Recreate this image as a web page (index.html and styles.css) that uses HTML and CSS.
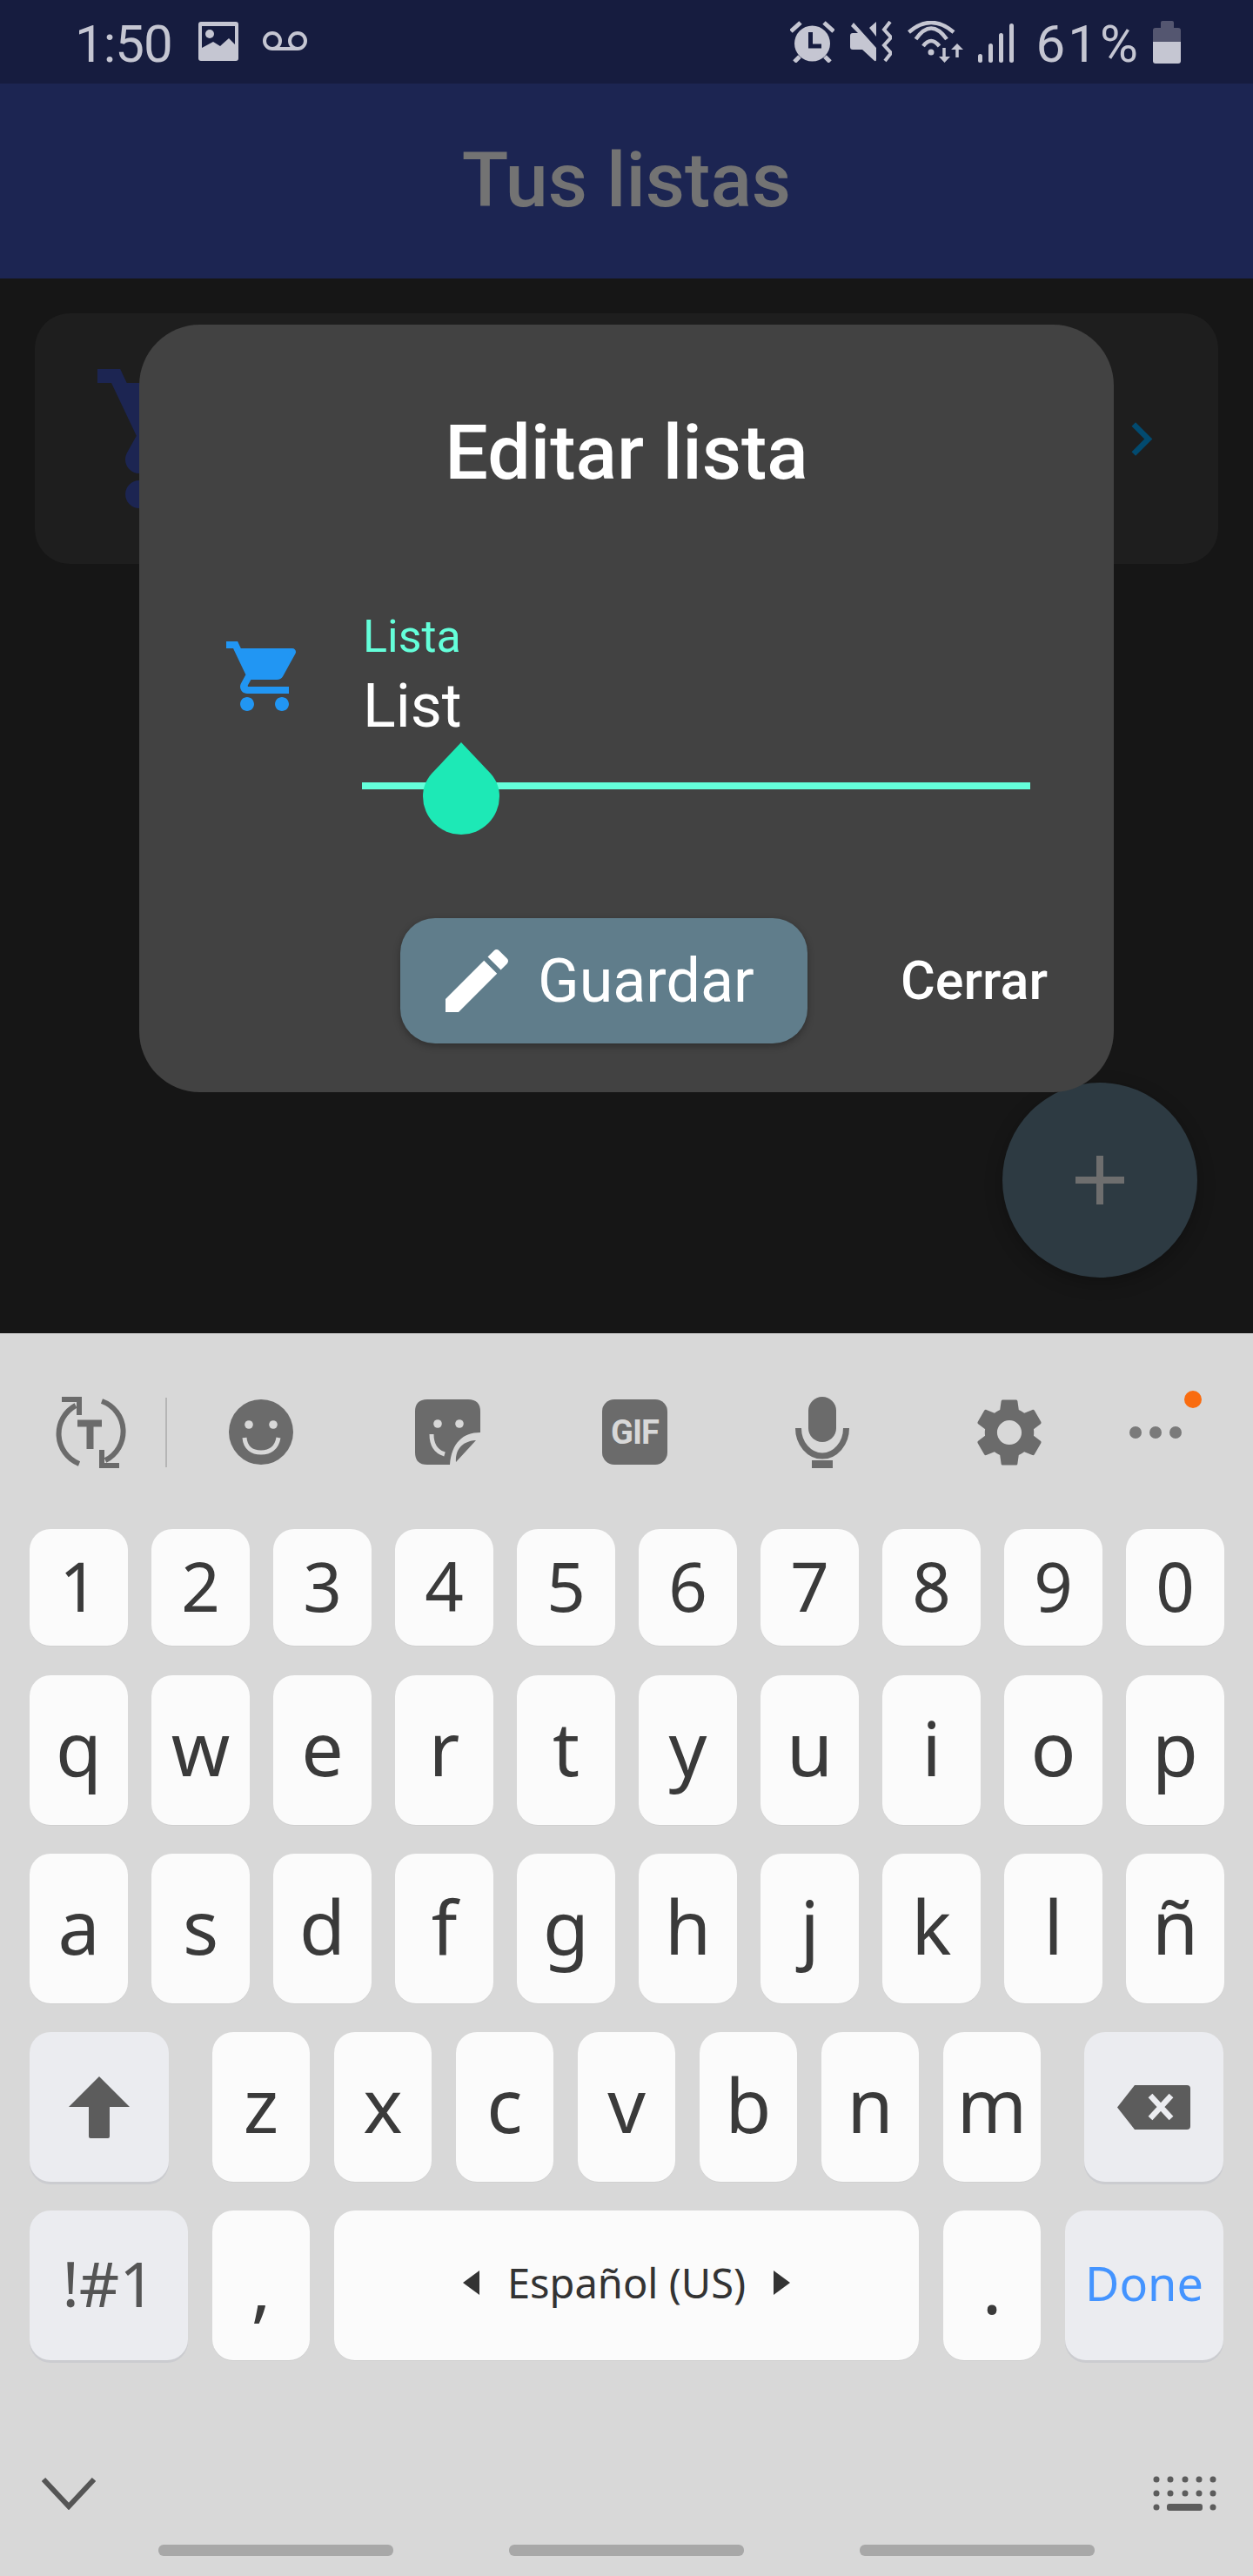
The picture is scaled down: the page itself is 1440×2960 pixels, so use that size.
FILE: index.html
```html
<!DOCTYPE html>
<html lang="es">
<head>
    <meta charset="UTF-8">
    <meta name="viewport" content="width=device-width, initial-scale=1.0">
    <title>Tus listas</title>
    <link rel="stylesheet" href="styles.css">
</head>
<body>
<!-- barra de estado -->
<div class="status">
    <div class="status-left">
        <span class="clock">1:50</span>
        <svg class="st-image" width="46" height="45" viewBox="0 0 46 45">
            <rect width="46" height="45" rx="3" fill="#c5c6d2"/>
            <rect x="4" y="5" width="38" height="35" fill="#161c3f"/>
            <circle cx="13" cy="14" r="5" fill="#c5c6d2"/>
            <path d="M4 30L17 23L25 28L35 19L42 26V40H4Z" fill="#c5c6d2"/>
        </svg>
        <svg class="st-voicemail" width="51" height="24" viewBox="0 0 51 24" fill="none" stroke="#c5c6d2" stroke-width="4">
            <circle cx="11" cy="12" r="9"/>
            <circle cx="40" cy="12" r="9"/>
            <path d="M11 21H40"/>
        </svg>
    </div>
    <div class="status-right">
        <svg class="st-alarm" width="51" height="48" viewBox="0 0 51 48">
            <circle cx="25.5" cy="26" r="20.5" fill="#c5c6d2"/>
            <path d="M23.5 13V29H36" fill="none" stroke="#161c3f" stroke-width="5"/>
            <path d="M1 12L12 2M39 2L50 12M5 47L11 41M46 47L40 41" fill="none" stroke="#c5c6d2" stroke-width="5"/>
        </svg>
        <svg class="st-mute" width="48" height="48" viewBox="0 0 48 48">
            <path d="M4 2L30 31V44Q30 48 27 45L14 33H3Q0 33 0 30V17Q0 14 3 14H9L1 6Z" fill="#c5c6d2"/>
            <path d="M22 8L30 1V18Z" fill="#c5c6d2"/>
            <path d="M46 1L39 10L47 19L39 28L47 37L40 46" fill="none" stroke="#c5c6d2" stroke-width="4"/>
        </svg>
        <svg class="st-wifi" width="64" height="48" viewBox="0 0 64 48" fill="none" stroke="#c5c6d2">
            <path d="M1.5 13Q27 -9 53 13M9.5 21Q27 -4 45 21M18 29Q27 17 36.5 29" stroke-width="4.5"/>
            <circle cx="27" cy="36" r="3.5" fill="#c5c6d2" stroke="none"/>
            <path d="M42 31V42M57 42V29" stroke-width="3.5"/>
            <path d="M36 41H49L42.5 48ZM50 33H64L57 26Z" fill="#c5c6d2" stroke="none"/>
        </svg>
        <div class="st-signal">
            <i class="bar b1"></i><i class="bar b2"></i><i class="bar b3"></i><i class="bar b4"></i>
        </div>
        <span class="percent">61%</span>
        <div class="st-battery">
            <i class="nub"></i>
            <i class="cell"></i>
        </div>
    </div>
</div>

<div class="appbar">Tus listas</div>

<div class="content">
    <div class="card">
        <svg class="card-cart" width="192" height="192" viewBox="0 0 24 24"><path d="M7 18c-1.1 0-1.99.9-1.99 2S5.9 22 7 22s2-.9 2-2-.9-2-2-2zM1 2v2h2l3.6 7.59-1.35 2.45c-.16.28-.25.61-.25.96 0 1.1.9 2 2 2h12v-2H7.42c-.14 0-.25-.11-.25-.25l.03-.12.9-1.63h7.45c.75 0 1.41-.41 1.75-1.03l3.58-6.49c.08-.14.12-.31.12-.48 0-.55-.45-1-1-1H5.21l-.94-2H1zm16 16c-1.1 0-1.99.9-1.99 2s.89 2 1.99 2 2-.9 2-2-.9-2-2-2z"/></svg>
        <svg class="card-arrow" width="77" height="77" viewBox="0 0 24 24"><path d="M8.59 16.59L13.17 12 8.59 7.41 10 6l6 6-6 6-1.41-1.41z"/></svg>
    </div>

    <button class="fab"><i class="plus-h"></i><i class="plus-v"></i></button>

    <div class="dialog">
        <h2 class="dialog-title">Editar lista</h2>
        <div class="field">
            <svg class="field-cart" width="96" height="96" viewBox="0 0 24 24"><path d="M7 18c-1.1 0-1.99.9-1.99 2S5.9 22 7 22s2-.9 2-2-.9-2-2-2zM1 2v2h2l3.6 7.59-1.35 2.45c-.16.28-.25.61-.25.96 0 1.1.9 2 2 2h12v-2H7.42c-.14 0-.25-.11-.25-.25l.03-.12.9-1.63h7.45c.75 0 1.41-.41 1.75-1.03l3.58-6.49c.08-.14.12-.31.12-.48 0-.55-.45-1-1-1H5.21l-.94-2H1zm16 16c-1.1 0-1.99.9-1.99 2s.89 2 1.99 2 2-.9 2-2-.9-2-2-2z"/></svg>
            <div class="field-box">
                <div class="field-label">Lista</div>
                <div class="field-value">List</div>
                <div class="field-line"></div>
                <svg class="handle" width="88" height="106" viewBox="0 0 88 106"><path d="M44 0L78 36C85 44 88 53 88 62A44 44 0 0 1 0 62C0 53 3 44 10 36Z"/></svg>
            </div>
        </div>
        <div class="actions">
            <button class="btn-save">
                <svg width="96" height="96" viewBox="0 0 24 24"><path d="M3 17.25V21h3.75L17.81 9.94l-3.75-3.75L3 17.25zM20.71 7.04c.39-.39.39-1.02 0-1.41l-2.34-2.34c-.39-.39-1.02-.39-1.41 0l-1.83 1.83 3.75 3.75 1.83-1.83z"/></svg>
                <span>Guardar</span>
            </button>
            <button class="btn-close">Cerrar</button>
        </div>
    </div>
</div>

<!-- teclado -->
<div class="keyboard">
    <div class="kb-tools">
        <svg class="tool-translate" width="82" height="82" viewBox="0 0 82 82" fill="none" stroke="#6b6b6b">
            <path d="M24 10A37 37 0 0 0 28 77M54 5A37 37 0 0 1 58 73" stroke-width="6"/>
            <path d="M8 3H28V21M74 79H54V61" stroke-width="6"/>
            <path d="M26 30.5H54M40.5 30V60" stroke-width="8"/>
        </svg>
        <i class="tool-sep"></i>
        <div class="tool">
            <svg width="74" height="75" viewBox="0 0 74 75">
                <ellipse cx="37" cy="37.5" rx="37" ry="37.5" fill="#6b6b6b"/>
                <circle cx="23" cy="29" r="4.8" fill="#d8d8d8"/>
                <circle cx="51" cy="29" r="4.8" fill="#d8d8d8"/>
                <path d="M18 44C19 56 27 61 37 61S55 56 57 44" fill="none" stroke="#d8d8d8" stroke-width="5"/>
            </svg>
        </div>
        <div class="tool">
            <svg width="75" height="75" viewBox="0 0 75 75" fill="#6b6b6b">
                <path d="M14 0H61Q75 0 75 14V38C55 38 42 50 40 75H14Q0 75 0 61V14Q0 0 14 0Z"/>
                <path d="M70 47L47 72C46 60 52 48 70 47Z"/>
                <circle cx="26" cy="28" r="4.8" fill="#d8d8d8"/>
                <circle cx="51" cy="28" r="4.8" fill="#d8d8d8"/>
                <path d="M19 40C19 52 24 60 34 63" fill="none" stroke="#d8d8d8" stroke-width="5"/>
            </svg>
        </div>
        <div class="tool"><div class="gif">GIF</div></div>
        <div class="tool">
            <svg width="62" height="82" viewBox="0 0 62 82" fill="#6b6b6b">
                <rect x="15" width="32" height="52" rx="16"/>
                <path d="M3.5 36a27.5 32 0 0 0 55 0" fill="none" stroke="#6b6b6b" stroke-width="7"/>
                <rect x="19" y="73" width="24" height="9"/>
            </svg>
        </div>
        <div class="tool">
            <svg width="94" height="94" viewBox="0 0 24 24" fill="#6b6b6b"><path d="M19.14 12.94c.04-.3.06-.61.06-.94 0-.32-.02-.64-.07-.94l2.03-1.58c.18-.14.23-.41.12-.61l-1.92-3.32c-.12-.22-.37-.29-.59-.22l-2.39.96c-.5-.38-1.03-.7-1.62-.94l-.36-2.54c-.04-.24-.24-.41-.48-.41h-3.84c-.24 0-.43.17-.47.41l-.36 2.54c-.59.24-1.13.57-1.62.94l-2.39-.96c-.22-.08-.47 0-.59.22L2.74 8.87c-.12.21-.08.47.12.61l2.03 1.58c-.05.3-.09.63-.09.94s.02.64.07.94l-2.03 1.58c-.18.14-.23.41-.12.61l1.92 3.32c.12.22.37.29.59.22l2.39-.96c.5.38 1.03.7 1.62.94l.36 2.54c.05.24.24.41.48.41h3.84c.24 0 .44-.17.47-.41l.36-2.54c.59-.24 1.13-.56 1.62-.94l2.39.96c.22.08.47 0 .59-.22l1.92-3.32c.12-.22.07-.47-.12-.61l-2.01-1.58zM12 15.6c-1.98 0-3.6-1.62-3.6-3.6s1.62-3.6 3.6-3.6 3.6 1.62 3.6 3.6-1.62 3.6-3.6 3.6z"/></svg>
        </div>
        <div class="more"><i></i><i></i><i></i><b class="more-dot"></b></div>
    </div>

    <div class="kb-row row-num">
        <div class="key">1</div><div class="key">2</div><div class="key">3</div><div class="key">4</div><div class="key">5</div><div class="key">6</div><div class="key">7</div><div class="key">8</div><div class="key">9</div><div class="key">0</div>
    </div>
    <div class="kb-row">
        <div class="key">q</div><div class="key">w</div><div class="key">e</div><div class="key">r</div><div class="key">t</div><div class="key">y</div><div class="key">u</div><div class="key">i</div><div class="key">o</div><div class="key">p</div>
    </div>
    <div class="kb-row">
        <div class="key">a</div><div class="key">s</div><div class="key">d</div><div class="key">f</div><div class="key">g</div><div class="key">h</div><div class="key">j</div><div class="key">k</div><div class="key">l</div><div class="key">ñ</div>
    </div>
    <div class="kb-row row-z">
        <div class="key fn key-shift">
            <svg width="70" height="71" viewBox="0 0 70 71" fill="#5c5c5c"><path d="M35 0L70 35H47V69Q47 71 45 71H25Q23 71 23 69V35H0Z"/></svg>
        </div>
        <div class="key">z</div><div class="key">x</div><div class="key">c</div><div class="key">v</div><div class="key">b</div><div class="key">n</div><div class="key">m</div>
        <div class="key fn key-back">
            <svg width="84" height="51" viewBox="0 0 84 51"><path d="M20 0H80Q84 0 84 4V47Q84 51 80 51H20L0 25.5Z" fill="#5c5c5c"/><path d="M38 12L62 38M62 12L38 38" stroke="#ebecf0" stroke-width="6.5"/></svg>
        </div>
    </div>
    <div class="kb-row row-space">
        <div class="key fn key-sym">!#1</div>
        <div class="key key-punct">,</div>
        <div class="key key-space"><i class="tri-l"></i><span>Español (US)</span><i class="tri-r"></i></div>
        <div class="key key-punct">.</div>
        <div class="key fn key-done">Done</div>
    </div>

    <div class="kb-bottom">
        <svg width="62" height="38" viewBox="0 0 62 38" fill="none" stroke="#555" stroke-width="6"><path d="M2 3L31 34L60 3"/></svg>
        <svg width="73" height="40" viewBox="0 0 73 40" fill="#5c5c5c">
            <circle cx="4" cy="4" r="3.5"/><circle cx="20" cy="4" r="3.5"/><circle cx="37" cy="4" r="3.5"/><circle cx="53" cy="4" r="3.5"/><circle cx="69" cy="4" r="3.5"/>
            <circle cx="4" cy="20" r="3.5"/><circle cx="20" cy="20" r="3.5"/><circle cx="37" cy="20" r="3.5"/><circle cx="53" cy="20" r="3.5"/><circle cx="69" cy="20" r="3.5"/>
            <circle cx="4" cy="36" r="3.5"/><rect x="16" y="32" width="41" height="8" rx="3"/><circle cx="69" cy="36" r="3.5"/>
        </svg>
    </div>
    <div class="kb-nav"><i></i><i></i><i></i></div>
</div>
</body>
</html>
```

FILE: styles.css
```css
*{
    box-sizing: border-box;
    margin:0;
    padding:0;
}
html,body{
    width:1440px;
    height:2960px;
    overflow:hidden;
}
body{
    display:flex;
    flex-direction:column;
    font-family:Roboto,"Noto Sans",sans-serif;
    background:#161616;
}
button{
    border:none;
    font-family:inherit;
    color:#fff;
    background:none;
}
i{
    display:block;
}

/* status */
.status{
    height:96px;
    flex:none;
    background:#161c3f;
    color:#c5c6d2;
    display:flex;
    justify-content:space-between;
    padding:0 83px 0 86px;
}
.status-left,.status-right{
    display:flex;
    align-items:flex-start;
    padding-top:24px;
}
.clock,.percent{
    font-size:60px;
    line-height:50px;
    margin-top:2px;
}
.clock{
    letter-spacing:-1px;
}
.st-image{
    margin:1px 0 0 30px;
}
.st-voicemail{
    margin:11px 0 0 28px;
}
.st-mute{
    margin-left:18px;
}
.st-wifi{
    margin-left:18px;
}
.st-signal{
    margin-left:17px;
    width:41px;
    height:48px;
    display:flex;
    justify-content:space-between;
    align-items:flex-end;
}
.bar{
    width:5px;
    background:#c5c6d2;
    border-radius:3px;
}
.b1{height:10px;}
.b2{height:22px;}
.b3{height:34px;}
.b4{height:45px;}
.percent{
    margin-left:26px;
    letter-spacing:3px;
}
.st-battery{
    margin-left:14px;
    width:32px;
}
.nub{
    width:15px;
    height:8px;
    margin:0 auto;
    background:#545670;
    border-radius:2px 2px 0 0;
}
.cell{
    height:41px;
    border-radius:3px;
    background:linear-gradient(#545670 16px,#c5c6d2 16px);
}

/* app */
.appbar{
    height:224px;
    flex:none;
    background:#1c2552;
    color:#737373;
    font-size:88px;
    font-weight:500;
    display:flex;
    align-items:center;
    justify-content:center;
    padding-bottom:4px;
}
.content{
    height:1212px;
    flex:none;
    position:relative;
    padding:40px 40px 0;
    background:#161616;
}
.card{
    height:288px;
    border-radius:40px;
    background:#1e1e1e;
    padding:0 50px 0 64px;
    display:flex;
    align-items:center;
    justify-content:space-between;
}
.card-cart{
    fill:#1c2552;
}
.card-arrow{
    fill:#024a6f;
}
.fab{
    position:absolute;
    left:1152px;
    top:924px;
    width:224px;
    height:224px;
    border-radius:50%;
    background:#2d3a42;
    box-shadow:0 6px 20px rgba(0,0,0,.25);
}
.plus-h,.plus-v{
    position:absolute;
    background:#6e6e6e;
}
.plus-h{
    left:84px;
    top:108px;
    width:56px;
    height:8px;
}
.plus-v{
    left:108px;
    top:84px;
    width:8px;
    height:56px;
}

/* dialog */
.dialog{
    position:absolute;
    left:160px;
    top:53px;
    width:1120px;
    height:882px;
    border-radius:70px;
    background:#424242;
    color:#fff;
}
.dialog-title{
    text-align:center;
    font-size:88px;
    line-height:100px;
    font-weight:500;
    padding-top:97px;
    height:197px;
}
.field{
    display:flex;
    margin-top:119px;
    padding-left:96px;
    height:366px;
}
.field-cart{
    fill:#2196f3;
    margin-top:40px;
}
.field-box{
    position:relative;
    margin-left:64px;
    width:768px;
}
.field-label{
    color:#64ffda;
    font-size:52px;
    line-height:60px;
    margin-top:13px;
    padding-left:1px;
}
.field-value{
    font-size:70px;
    line-height:80px;
    margin-top:9px;
    padding-left:1px;
}
.field-line{
    height:8px;
    margin-top:48px;
    background:#64ffda;
}
.handle{
    position:absolute;
    left:70px;
    top:164px;
    fill:#1de9b6;
}
.actions{
    display:flex;
    align-items:center;
    padding-left:300px;
}
.btn-save{
    width:468px;
    height:144px;
    border-radius:40px;
    background:#607d8b;
    display:flex;
    align-items:center;
    padding-left:40px;
    font-size:70px;
    box-shadow:0 3px 8px rgba(0,0,0,.3);
}
.btn-save svg{
    fill:#fff;
    flex:none;
}
.btn-save span{
    margin-left:22px;
}
.btn-close{
    margin-left:107px;
    font-size:61px;
    font-weight:500;
}

/* keyboard */
.keyboard{
    flex:1;
    background:#d8d8d8;
}
.kb-tools{
    height:225px;
    display:flex;
    align-items:center;
    padding:2px 0 0 63px;
    position:relative;
}
.tool-sep{
    width:2px;
    height:80px;
    margin-left:45px;
    background:#b5b5b5;
}
.tool{
    width:215px;
    display:flex;
    justify-content:center;
    flex:none;
}
.gif{
    width:75px;
    height:75px;
    border-radius:14px;
    background:#6b6b6b;
    color:#d8d8d8;
    font-size:38px;
    font-weight:700;
    display:flex;
    align-items:center;
    justify-content:center;
    letter-spacing:-1px;
}
.more{
    position:relative;
    display:flex;
    gap:9px;
    margin-left:31px;
}
.more i{
    width:14px;
    height:14px;
    border-radius:50%;
    background:#7a7a7a;
}
.more-dot{
    position:absolute;
    left:63px;
    top:-41px;
    width:20px;
    height:20px;
    border-radius:50%;
    background:#f96c10;
}
.kb-row{
    display:flex;
    gap:27px;
    padding:0 34px;
    height:172px;
    margin-bottom:33px;
}
.row-num{
    height:134px;
    margin-bottom:34px;
}
.row-z,.row-space{
    gap:28px;
}
.key{
    width:113px;
    flex:none;
    border-radius:24px;
    background:#fbfbfb;
    color:#3a3a3a;
    font-family:"Noto Sans",sans-serif;
    font-size:86px;
    line-height:1;
    display:flex;
    align-items:center;
    justify-content:center;
    padding-bottom:6px;
    box-shadow:0 1px 0 #d0d0d0;
}
.row-num .key{
    font-size:78px;
    padding-bottom:4px;
}
.row-z .key,.row-space .key{
    width:112px;
}
.key.fn{
    background:#ebecf0;
    box-shadow:0 3px 0 #cbccd0;
}
.row-z .key-shift,.row-z .key-back{
    width:160px;
    padding-bottom:0;
}
.key-shift{
    margin-right:22px;
}
.key-back{
    margin-left:22px;
}
.row-space .key-sym{
    width:182px;
    font-size:72px;
    color:#555;
}
.row-space .key-punct{
    padding-bottom:0;
}
.row-space .key-space{
    width:672px;
    font-size:47px;
    color:#333;
    gap:32px;
}
.row-space .key-done{
    width:182px;
    font-size:54px;
    color:#4494ff;
}
.tri-l,.tri-r{
    width:0;
    height:0;
    border-top:14px solid transparent;
    border-bottom:14px solid transparent;
}
.tri-l{
    border-right:19px solid #333;
}
.tri-r{
    border-left:19px solid #333;
}
.kb-bottom{
    display:flex;
    justify-content:space-between;
    align-items:center;
    padding:0 42px 0 48px;
    margin-top:133px;
}
.kb-nav{
    display:flex;
    gap:133px;
    padding-left:182px;
    margin-top:39px;
}
.kb-nav i{
    width:270px;
    height:13px;
    border-radius:6px;
    background:#a8a8a8;
}
```
